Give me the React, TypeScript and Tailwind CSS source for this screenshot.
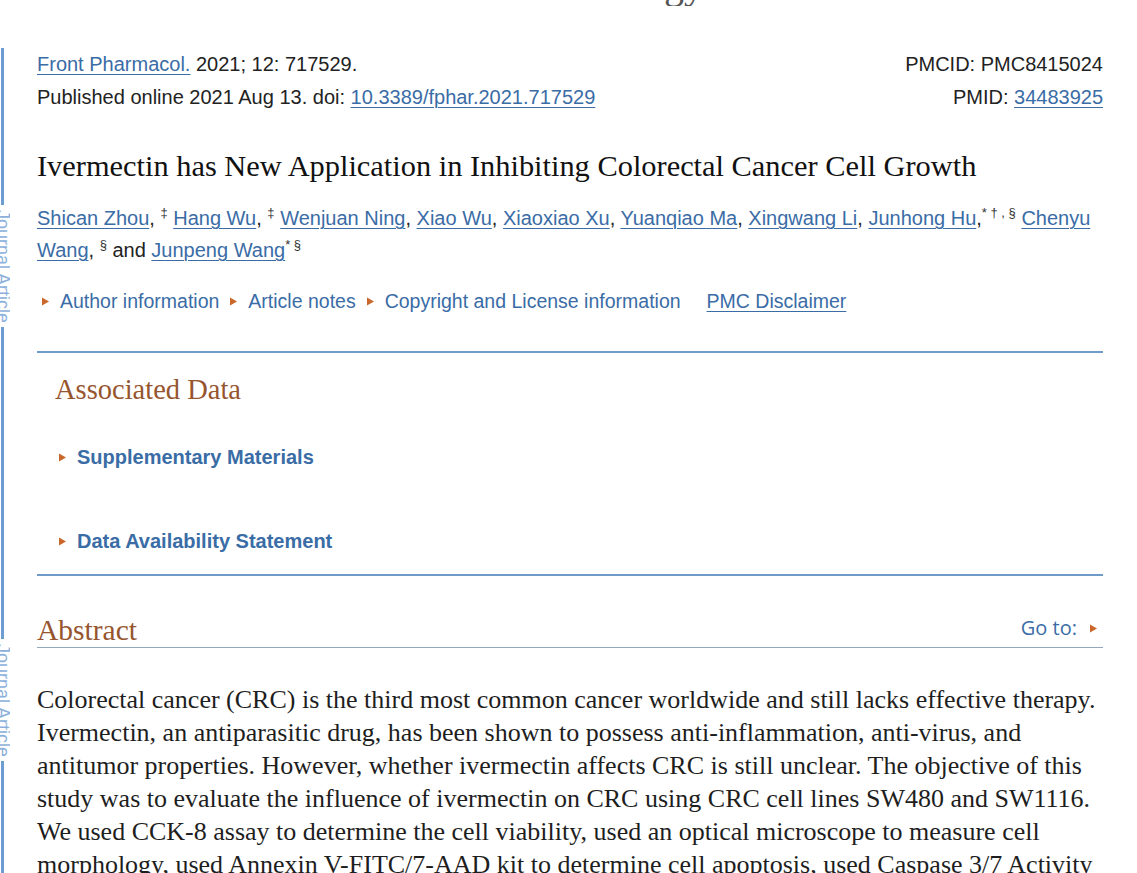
import React from 'react';

const sans = { fontFamily: '"Liberation Sans", Arial, sans-serif' };
const serif = { fontFamily: '"Liberation Serif", "Times New Roman", serif' };

function Tri({ className = '' }: { className?: string }) {
  return (
    <svg width="7" height="9" viewBox="0 0 7 9" className={className}>
      <path d="M0 0.5 L7 4.5 L0 8.5 Z" fill="#c9682a" />
    </svg>
  );
}

function Link({ children, plain = false }: { children: React.ReactNode; plain?: boolean }) {
  return (
    <a
      href="#"
      className={`text-[#3a6ca6] ${plain ? 'no-underline' : 'underline decoration-1 underline-offset-[3px]'}`}
    >
      {children}
    </a>
  );
}

function Sup({ children }: { children: React.ReactNode }) {
  return <sup className="text-[13px] text-[#333] top-[-0.6em]">{children}</sup>;
}

function SideRail() {
  const label = (
    <div className="my-[5px] h-[112px] w-[10px] overflow-hidden">
      <div
        className="-ml-[6px] text-[18px] leading-[18px] text-[#8cb0dc] [writing-mode:vertical-rl] whitespace-nowrap"
        style={sans}
      >
        Journal Article
      </div>
    </div>
  );
  return (
    <div className="absolute left-0 top-[48px] flex flex-col items-start">
      <div className="ml-[1px] h-[157px] w-[3px] bg-[#6c9cd1]" />
      {label}
      <div className="ml-[1px] h-[312px] w-[3px] bg-[#6c9cd1]" />
      {label}
      <div className="ml-[1px] h-[200px] w-[3px] bg-[#6c9cd1]" />
    </div>
  );
}

const abstractLines = [
  'Colorectal cancer (CRC) is the third most common cancer worldwide and still lacks effective therapy.',
  'Ivermectin, an antiparasitic drug, has been shown to possess anti-inflammation, anti-virus, and',
  'antitumor properties. However, whether ivermectin affects CRC is still unclear. The objective of this',
  'study was to evaluate the influence of ivermectin on CRC using CRC cell lines SW480 and SW1116.',
  'We used CCK-8 assay to determine the cell viability, used an optical microscope to measure cell',
  'morphology, used Annexin V-FITC/7-AAD kit to determine cell apoptosis, used Caspase 3/7 Activity',
  'kit to determine the Caspase 3/7 activity, used Western blot to determine the expression of',
];

export default function App() {
  return (
    <div className="relative h-[873px] w-full overflow-hidden bg-white text-[#222]" style={sans}>
      <SideRail />

      {/* bottom of the journal banner, scrolled off */}
      <div className="h-[6px] overflow-hidden">
        <div className="-mt-[35px] pl-[664px] text-[40px] leading-[40px] text-[#555]" style={serif}>
          gy
        </div>
      </div>

      <main className="ml-[37px] w-[1066px] pt-[42px]">
        <div className="flex justify-between text-[20px] leading-[33px]">
          <div>
            <div>
              <Link>Front Pharmacol.</Link> 2021; 12: 717529.
            </div>
            <div>
              Published online 2021 Aug 13. doi: <Link>10.3389/fphar.2021.717529</Link>
            </div>
          </div>
          <div className="text-right">
            <div>PMCID: PMC8415024</div>
            <div>
              PMID: <Link>34483925</Link>
            </div>
          </div>
        </div>

        <h1 className="mt-[33px] text-[30.4px] leading-[38px] text-[#111]" style={serif}>
          Ivermectin has New Application in Inhibiting Colorectal Cancer Cell Growth
        </h1>

        <div className="mt-[17px] text-[20px] leading-[32px]">
          <div className="whitespace-nowrap">
            <Link>Shican Zhou</Link>, <Sup>‡</Sup> <Link>Hang Wu</Link>, <Sup>‡</Sup>{' '}
            <Link>Wenjuan Ning</Link>, <Link>Xiao Wu</Link>, <Link>Xiaoxiao Xu</Link>,{' '}
            <Link>Yuanqiao Ma</Link>, <Link>Xingwang Li</Link>, <Link>Junhong Hu</Link>,
            <Sup>* † , §</Sup> <Link>Chenyu</Link>
          </div>
          <div className="whitespace-nowrap">
            <Link>Wang</Link>, <Sup>§</Sup> and <Link>Junpeng Wang</Link>
            <Sup>* §</Sup>
          </div>
        </div>

        <div className="mt-[19px] flex items-center text-[19.5px] leading-[32px] text-[#3a6ca6]">
          <Tri className="ml-[5px] mr-[11px]" />
          <Link plain>Author information</Link>
          <Tri className="ml-[11px] mr-[11px]" />
          <Link plain>Article notes</Link>
          <Tri className="ml-[11px] mr-[11px]" />
          <Link plain>Copyright and License information</Link>
          <span className="ml-[26px]">
            <Link>PMC Disclaimer</Link>
          </span>
        </div>

        <div className="mt-[34px] h-[2px] bg-[#6f9bc8]" />

        <section className="pl-[18px]">
          <h2 className="mt-[20px] text-[28.5px] leading-[34px] text-[#96552f]" style={serif}>
            Associated Data
          </h2>
          <div className="mt-[35px] flex items-center text-[20px] font-bold leading-[30px] text-[#3a6ca6]">
            <Tri className="ml-[4px] mr-[11px]" />
            Supplementary Materials
          </div>
          <div className="mt-[54px] flex items-center text-[20px] font-bold leading-[30px] text-[#3a6ca6]">
            <Tri className="ml-[4px] mr-[11px]" />
            Data Availability Statement
          </div>
        </section>

        <div className="mt-[18px] h-[2px] bg-[#6f9bc8]" />

        <div className="mt-[37px] flex items-end justify-between border-b border-[#94a7bd]">
          <h2 className="text-[29.5px] leading-[34px] text-[#96552f]" style={serif}>
            Abstract
          </h2>
          <div
            className="mb-[5px] mr-[6px] flex items-center text-[20px] leading-[28px] text-[#3a6ca6]"
            style={{ fontFamily: '"Open Sans", sans-serif' }}
          >
            Go to:
            <Tri className="ml-[13px]" />
          </div>
        </div>

        <div className="mt-[35px] text-[26px] leading-[33px] text-[#1e1e1e]" style={serif}>
          {abstractLines.map((l) => (
            <div key={l} className="whitespace-nowrap">
              {l}
            </div>
          ))}
        </div>
      </main>
    </div>
  );
}
